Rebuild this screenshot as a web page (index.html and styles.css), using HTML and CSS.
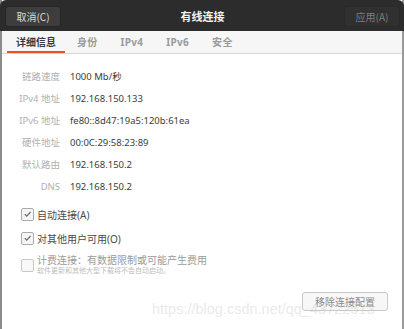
FILE: index.html
```html
<!DOCTYPE html>
<html lang="zh">
<head>
<meta charset="utf-8">
<link rel="stylesheet" href="styles.css">
</head>
<body>
<div class="window">
  <header class="titlebar">
    <button class="hbtn">取消(C)</button>
    <div class="title">有线连接</div>
    <button class="hbtn disabled">应用(A)</button>
  </header>
  <nav class="tabs">
    <div class="tab active">详细信息</div>
    <div class="tab">身份</div>
    <div class="tab">IPv4</div>
    <div class="tab">IPv6</div>
    <div class="tab">安全</div>
  </nav>
  <main class="content">
    <div class="details">
      <div class="lbl">链路速度</div><div class="val">1000 Mb/秒</div>
      <div class="lbl">IPv4 地址</div><div class="val">192.168.150.133</div>
      <div class="lbl">IPv6 地址</div><div class="val">fe80::8d47:19a5:120b:61ea</div>
      <div class="lbl">硬件地址</div><div class="val">00:0C:29:58:23:89</div>
      <div class="lbl">默认路由</div><div class="val">192.168.150.2</div>
      <div class="lbl">DNS</div><div class="val">192.168.150.2</div>
    </div>
    <div class="checks">
      <div class="check">
        <span class="box checked"><svg viewBox="0 0 12 12" width="12" height="12"><path d="M3 6.2 L5.2 8.4 L9.3 3.8" fill="none" stroke="#6a6a6a" stroke-width="1.3"/></svg></span>
        <span class="ctext">自动连接(A)</span>
      </div>
      <div class="check">
        <span class="box checked"><svg viewBox="0 0 12 12" width="12" height="12"><path d="M3 6.2 L5.2 8.4 L9.3 3.8" fill="none" stroke="#6a6a6a" stroke-width="1.3"/></svg></span>
        <span class="ctext">对其他用户可用(O)</span>
      </div>
      <div class="check metered">
        <span class="box dim"></span>
        <div class="ctexts">
          <span class="ctext light">计费连接：有数据限制或可能产生费用</span>
          <span class="sub">软件更新和其他大型下载将不会自动启动。</span>
        </div>
      </div>
    </div>
    <div class="footer">
      <button class="remove">移除连接配置</button>
    </div>
  </main>
  <div class="watermark">https://blog.csdn.net/qq_43722513</div>
</div>
</body>
</html>
```
FILE: styles.css
```css
html, body {
  margin: 0;
  padding: 0;
}
body {
  width: 404px;
  height: 329px;
  background: #d8d8d8;
  font-family: "Noto Sans", "Noto Sans CJK SC", sans-serif;
  overflow: hidden;
}
.window {
  position: relative;
  width: 400px;
  height: 329px;
  border-left: 2px solid #8c8c8c;
  border-right: 2px solid #9a9a9a;
  background: #ffffff;
  display: flex;
  flex-direction: column;
}
.titlebar {
  height: 31px;
  box-sizing: border-box;
  background: #2c2c2c;
  border-radius: 6px 6px 0 0;
  display: flex;
  align-items: center;
  justify-content: space-between;
  padding: 0 4px 0 5px;
  margin: 0 -2px;
}
.hbtn {
  width: 56px;
  height: 21px;
  border: 1px solid #262626;
  border-radius: 3px;
  background: #3d3d3d;
  color: #dcdcdc;
  font-family: "Noto Sans CJK SC", sans-serif;
  font-size: 10px;
  padding: 0;
  margin-top: 1px;
}
.hbtn.disabled {
  background: #303030;
  color: #7d7d7d;
  border-color: #2a2a2a;
}
.title {
  color: #f2f2f2;
  font-weight: bold;
  font-size: 11px;
  font-family: "Noto Sans CJK SC", sans-serif;
}
.tabs {
  height: 23px;
  box-sizing: border-box;
  background: #f6f6f6;
  border-bottom: 1px solid #d6d6d6;
  display: flex;
  padding-left: 5px;
}
.tab {
  padding: 0 11px;
  margin-right: 1px;
  font-size: 10px;
  font-weight: bold;
  color: #9b9b9b;
  line-height: 22px;
  letter-spacing: 0.3px;
  font-family: "Noto Sans", "Noto Sans CJK SC", sans-serif;
}
.tab.active {
  color: #3a3a3a;
  box-shadow: inset 0 -2px 0 #e95420;
  padding: 0 9px;
  letter-spacing: 0;
}
.content {
  flex: 1;
  display: flex;
  flex-direction: column;
}
.details {
  display: grid;
  grid-template-columns: 58px auto;
  column-gap: 10px;
  grid-auto-rows: 22px;
  align-items: center;
  padding-top: 11px;
  font-size: 9.5px;
}
.lbl {
  color: #b0b0b0;
  text-align: right;
}
.val {
  color: #3c3c3c;
}
.checks {
  display: flex;
  flex-direction: column;
  padding-left: 19px;
  margin-top: 5px;
}
.check {
  display: flex;
  align-items: center;
  height: 24px;
  flex: none;
}
.box {
  width: 11px;
  height: 11px;
  border: 1px solid #aaaaaa;
  border-radius: 2px;
  background: #f5f5f5;
  display: flex;
  align-items: center;
  justify-content: center;
  margin-right: 3px;
}
.box svg { display: block; }
.box.dim {
  border-color: #c8c8c8;
  background: #f8f8f8;
}
.ctext {
  font-size: 10px;
  color: #4a4a4a;
}
.ctext.light {
  color: #9a9a9a;
}
.check.metered {
  margin-top: 2px;
  height: 26px;
}
.ctexts {
  display: flex;
  flex-direction: column;
  line-height: 12px;
}
.sub {
  font-size: 7px;
  color: #bdbdbd;
  line-height: 10px;
}
.footer {
  display: flex;
  justify-content: flex-end;
  padding-right: 14px;
  margin-top: 14px;
}
.remove {
  width: 86px;
  height: 19px;
  border: 1px solid #c9c9c9;
  border-radius: 3px;
  background: #f7f7f7;
  color: #8a8a8a;
  font-size: 10px;
  font-family: "Noto Sans CJK SC", sans-serif;
  padding: 0;
}
.watermark {
  position: absolute;
  left: 150px;
  top: 301px;
  font-family: "Liberation Sans", Arial, sans-serif;
  font-size: 14.5px;
  color: rgba(200, 200, 200, 0.4);
  white-space: nowrap;
  pointer-events: none;
}
```
